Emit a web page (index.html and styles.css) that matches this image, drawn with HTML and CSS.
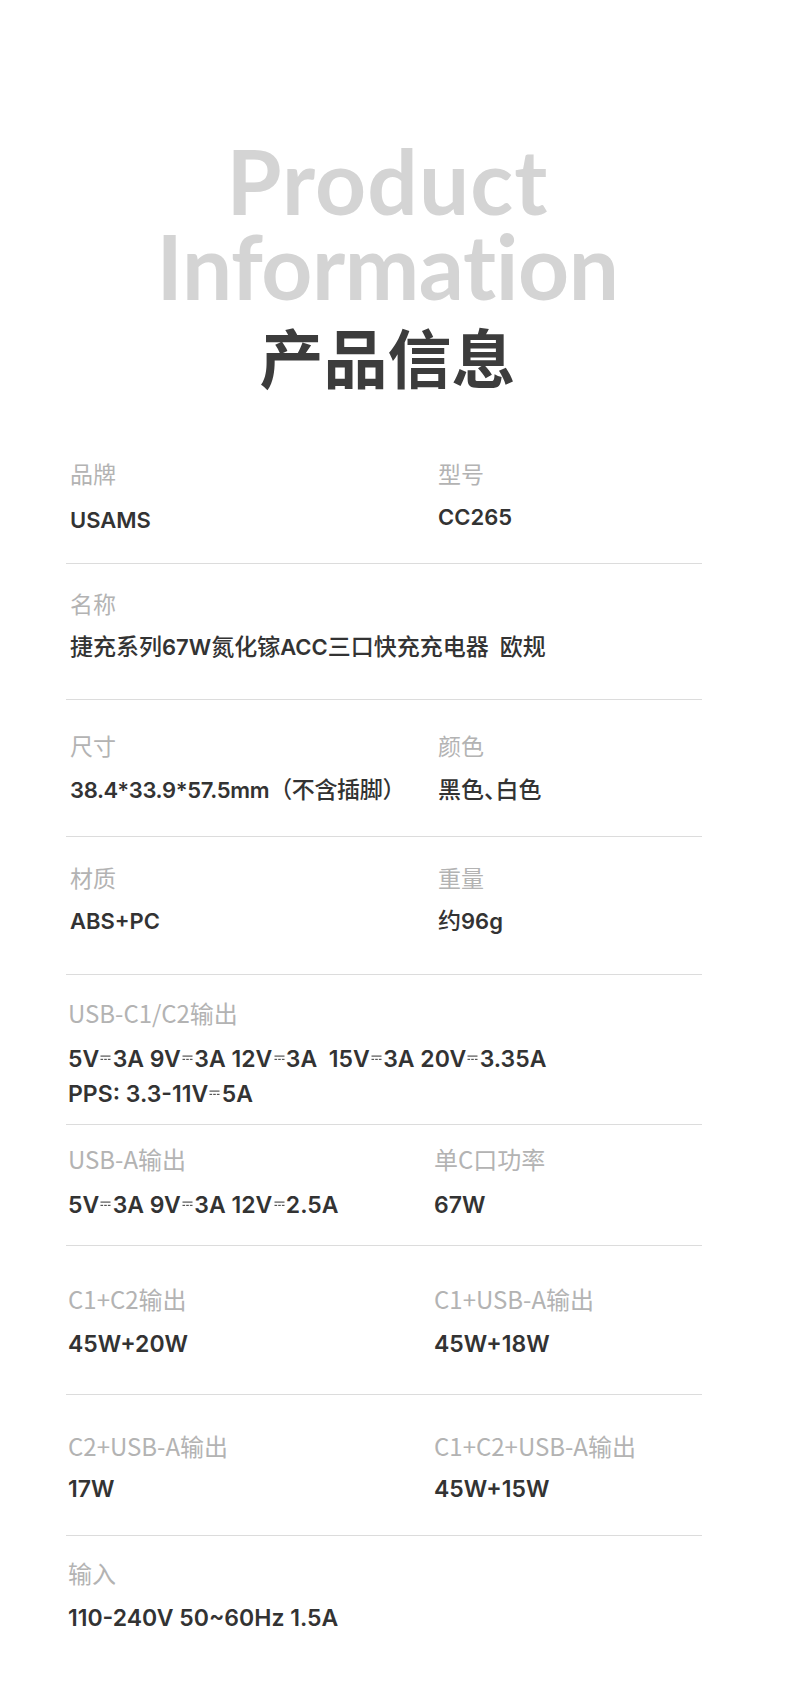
FILE: index.html
```html
<!DOCTYPE html>
<html lang="zh-CN">
<head>
<meta charset="utf-8">
<title>Product Information</title>
<link rel="stylesheet" href="styles.css">
</head>
<body>
<div class="page">
  <header class="head">
    <div class="en en-1">Product</div>
    <div class="en en-2">Information</div>
    <div class="cn">产品信息</div>
  </header>

  <div class="specs">
    <div class="row r1">
      <div class="cell"><div class="k">品牌</div><div class="v">USAMS</div></div>
      <div class="cell"><div class="k">型号</div><div class="v up">CC265</div></div>
    </div>
    <div class="row r2">
      <div class="cell wide"><div class="k">名称</div><div class="v"><span class="cj">捷充系列</span>67W<span class="cj">氮化镓</span>ACC<span class="cj">三口快充充电器</span>&nbsp; <span class="cj">欧规</span></div></div>
    </div>
    <div class="row r3">
      <div class="cell"><div class="k">尺寸</div><div class="v tight">38.4*33.9*57.5mm<span class="cj">（不含插脚）</span></div></div>
      <div class="cell"><div class="k">颜色</div><div class="v"><span class="cj">黑色<span class="h">、</span>白色</span></div></div>
    </div>
    <div class="row r4">
      <div class="cell"><div class="k">材质</div><div class="v">ABS+PC</div></div>
      <div class="cell"><div class="k">重量</div><div class="v"><span class="cj">约</span>96g</div></div>
    </div>

    <div class="row lo r5">
      <div class="cell wide"><div class="k">USB-C1/C2输出</div>
        <div class="v">5V<svg class="dc" viewBox="0 0 10 6"><rect x="0" y="0.5" width="10" height="1.2"/><rect x="0" y="3.8" width="2.6" height="1.2"/><rect x="3.7" y="3.8" width="2.6" height="1.2"/><rect x="7.4" y="3.8" width="2.6" height="1.2"/></svg>3A 9V<svg class="dc" viewBox="0 0 10 6"><rect x="0" y="0.5" width="10" height="1.2"/><rect x="0" y="3.8" width="2.6" height="1.2"/><rect x="3.7" y="3.8" width="2.6" height="1.2"/><rect x="7.4" y="3.8" width="2.6" height="1.2"/></svg>3A 12V<svg class="dc" viewBox="0 0 10 6"><rect x="0" y="0.5" width="10" height="1.2"/><rect x="0" y="3.8" width="2.6" height="1.2"/><rect x="3.7" y="3.8" width="2.6" height="1.2"/><rect x="7.4" y="3.8" width="2.6" height="1.2"/></svg>3A&nbsp; 15V<svg class="dc" viewBox="0 0 10 6"><rect x="0" y="0.5" width="10" height="1.2"/><rect x="0" y="3.8" width="2.6" height="1.2"/><rect x="3.7" y="3.8" width="2.6" height="1.2"/><rect x="7.4" y="3.8" width="2.6" height="1.2"/></svg>3A 20V<svg class="dc" viewBox="0 0 10 6"><rect x="0" y="0.5" width="10" height="1.2"/><rect x="0" y="3.8" width="2.6" height="1.2"/><rect x="3.7" y="3.8" width="2.6" height="1.2"/><rect x="7.4" y="3.8" width="2.6" height="1.2"/></svg>3.35A</div>
        <div class="v">PPS: 3.3-11V<svg class="dc" viewBox="0 0 10 6"><rect x="0" y="0.5" width="10" height="1.2"/><rect x="0" y="3.8" width="2.6" height="1.2"/><rect x="3.7" y="3.8" width="2.6" height="1.2"/><rect x="7.4" y="3.8" width="2.6" height="1.2"/></svg>5A</div>
      </div>
    </div>
    <div class="row lo r6">
      <div class="cell"><div class="k">USB-A输出</div>
        <div class="v">5V<svg class="dc" viewBox="0 0 10 6"><rect x="0" y="0.5" width="10" height="1.2"/><rect x="0" y="3.8" width="2.6" height="1.2"/><rect x="3.7" y="3.8" width="2.6" height="1.2"/><rect x="7.4" y="3.8" width="2.6" height="1.2"/></svg>3A 9V<svg class="dc" viewBox="0 0 10 6"><rect x="0" y="0.5" width="10" height="1.2"/><rect x="0" y="3.8" width="2.6" height="1.2"/><rect x="3.7" y="3.8" width="2.6" height="1.2"/><rect x="7.4" y="3.8" width="2.6" height="1.2"/></svg>3A 12V<svg class="dc" viewBox="0 0 10 6"><rect x="0" y="0.5" width="10" height="1.2"/><rect x="0" y="3.8" width="2.6" height="1.2"/><rect x="3.7" y="3.8" width="2.6" height="1.2"/><rect x="7.4" y="3.8" width="2.6" height="1.2"/></svg>2.5A</div>
      </div>
      <div class="cell"><div class="k">单C口功率</div><div class="v">67W</div></div>
    </div>
    <div class="row lo r7">
      <div class="cell"><div class="k">C1+C2输出</div><div class="v">45W+20W</div></div>
      <div class="cell"><div class="k">C1+USB-A输出</div><div class="v">45W+18W</div></div>
    </div>
    <div class="row lo r8">
      <div class="cell"><div class="k">C2+USB-A输出</div><div class="v">17W</div></div>
      <div class="cell"><div class="k">C1+C2+USB-A输出</div><div class="v">45W+15W</div></div>
    </div>
    <div class="row lo r9 last">
      <div class="cell wide"><div class="k">输入</div><div class="v">110-240V 50~60Hz 1.5A</div></div>
    </div>
  </div>
</div>
</body>
</html>
```

FILE: styles.css
```css
* { box-sizing: border-box; }

html, body {
  margin: 0;
  padding: 0;
  background: #ffffff;
}

body {
  font-family: "Noto Sans CJK SC", "Noto Sans", sans-serif;
  color: #333333;
}

.page {
  width: 636px;
  margin-left: 66px;
  min-height: 1683px;
}

/* ---------- heading ---------- */
.head {
  padding-top: 138px;
  padding-left: 7px;
  text-align: center;
}

.en {
  font-family: "Lato", "Inter", sans-serif;
  font-weight: 700;
  font-size: 89px;
  line-height: 85px;
  height: 85px;
  color: #d4d4d4;
  font-variant-ligatures: none;
  font-feature-settings: "liga" 0, "dlig" 0;
}

.en-1 { letter-spacing: 1.1px; }
.en-2 { letter-spacing: -0.4px; }

.cn {
  margin-top: 7px;
  font-family: "Noto Sans CJK SC", sans-serif;
  font-weight: 700;
  font-size: 64px;
  line-height: 80px;
  color: #3c3c3c;
}

/* ---------- spec table ---------- */
.specs {
  margin-top: 63px;
}

.row {
  display: grid;
  grid-template-columns: 368px 1fr;
  padding-left: 4px;
  border-bottom: 1px solid #dcdcdc;
}

.row.last { border-bottom: none; }

.cell.wide { grid-column: 1 / -1; }

.k {
  font-family: "Noto Sans CJK SC", sans-serif;
  font-size: 23px;
  line-height: 30px;
  font-weight: 400;
  color: #b3b3b3;
  white-space: nowrap;
}

.v {
  font-family: "Inter", "Noto Sans CJK SC", sans-serif;
  font-size: 22px;
  line-height: 30px;
  height: 30px;
  font-weight: 600;
  color: #333333;
  white-space: nowrap;
}

.v.tight { letter-spacing: -0.35px; }

.v .cj {
  font-family: "Noto Sans CJK SC", sans-serif;
  font-weight: 500;
  font-size: 23px;
  line-height: 1;
}

.v .h { font-feature-settings: "halt" 1; }

.v.up { position: relative; top: -3px; }

/* upper rows */
.r1 { padding-top: 0; padding-bottom: 28px; }
.r1 .v { margin-top: 17px; }
.r2 { padding-top: 24px; padding-bottom: 37px; }
.r2 .v { margin-top: 14px; }
.r3 { padding-top: 30px; padding-bottom: 31px; }
.r3 .v { margin-top: 15px; }
.r4 { padding-top: 25px; padding-bottom: 38px; }
.r4 .v { margin-top: 14px; }

/* lower rows */
.row.lo {
  grid-template-columns: 366px 1fr;
  padding-left: 2px;
}

.lo .k {
  font-size: 24px;
  line-height: 30px;
}

.lo .v {
  font-size: 23px;
  line-height: 35px;
  height: 35px;
}

.r5 { padding-top: 23px; padding-bottom: 12px; }
.r5 .k + .v { margin-top: 14px; }
.r6 { padding-top: 19px; padding-bottom: 22px; }
.r6 .k + .v { margin-top: 14px; }
.r7 { padding-top: 38px; padding-bottom: 32px; }
.r7 .k + .v { margin-top: 13px; }
.r8 { padding-top: 36px; padding-bottom: 28px; }
.r8 .k + .v { margin-top: 11px; }
.r9 { padding-top: 22px; }
.r9 .k + .v { margin-top: 13px; }

.dc {
  display: inline-block;
  width: 11px;
  height: 6px;
  margin: 0 1.25px;
  vertical-align: 0.28em;
  fill: #555555;
}
```
